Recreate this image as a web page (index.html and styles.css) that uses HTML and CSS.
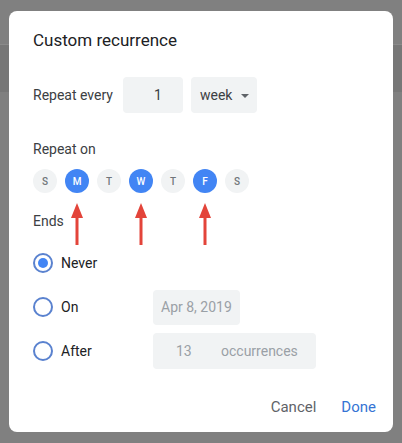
FILE: index.html
```html
<!DOCTYPE html>
<html>
<head>
<meta charset="utf-8">
<link rel="stylesheet" href="styles.css">
</head>
<body>
<div class="backdrop">
  <div class="dialog">
    <h1 class="title">Custom recurrence</h1>
    <div class="repeat-every">
      <span class="label">Repeat every</span>
      <div class="field num">1</div>
      <div class="field select">week<span class="caret"></span></div>
    </div>
    <div class="section-label">Repeat on</div>
    <div class="days">
      <div class="day">S</div>
      <div class="day sel">M<svg class="arrow" width="14" height="42" viewBox="0 0 14 42"><polygon points="7,0 13,15 1,15" fill="#e3443a"/><rect x="5.5" y="13" width="3" height="29" fill="#e3443a"/></svg></div>
      <div class="day">T</div>
      <div class="day sel">W<svg class="arrow" width="14" height="42" viewBox="0 0 14 42"><polygon points="7,0 13,15 1,15" fill="#e3443a"/><rect x="5.5" y="13" width="3" height="29" fill="#e3443a"/></svg></div>
      <div class="day">T</div>
      <div class="day sel">F<svg class="arrow" width="14" height="42" viewBox="0 0 14 42"><polygon points="7,0 13,15 1,15" fill="#e3443a"/><rect x="5.5" y="13" width="3" height="29" fill="#e3443a"/></svg></div>
      <div class="day">S</div>
    </div>
    <div class="section-label ends-label">Ends</div>
    <div class="ends">
      <div class="end-row">
        <div class="choice"><span class="radio checked"></span><span>Never</span></div>
      </div>
      <div class="end-row">
        <div class="choice"><span class="radio"></span><span>On</span></div>
        <div class="field disabled date">Apr 8, 2019</div>
      </div>
      <div class="end-row">
        <div class="choice"><span class="radio"></span><span>After</span></div>
        <div class="field disabled occ"><span class="occ-num">13</span><span>occurrences</span></div>
      </div>
    </div>
    <div class="actions">
      <span class="btn cancel">Cancel</span>
      <span class="btn done">Done</span>
    </div>
  </div>
</div>
</body>
</html>
```
FILE: styles.css
```css
* { box-sizing: border-box; }
html, body { margin: 0; padding: 0; }
body {
  width: 402px;
  height: 443px;
  overflow: hidden;
  font-family: Roboto, "Noto Sans", "Liberation Sans", sans-serif;
  background: linear-gradient(to bottom, #808080 0, #808080 44px, #8a8a8a 44px, #8a8a8a 45px, #777777 45px, #777777 92px, #808080 92px, #808080 100%);
}
.backdrop {
  padding: 11px 9px 11px 9px;
}
.dialog {
  width: 384px;
  height: 421px;
  background: #fff;
  border-radius: 8px;
  padding: 17px 24px 0 24px;
  color: #3c4043;
  display: flex;
  flex-direction: column;
}
.title {
  margin: 0;
  font-size: 17px;
  line-height: 24px;
  font-weight: 400;
  color: #202124;
}
.repeat-every {
  display: flex;
  align-items: center;
  margin-top: 25px;
  height: 36px;
}
.label {
  font-size: 14px;
  width: 90px;
}
.field {
  background: #f1f3f4;
  border-radius: 4px;
  height: 36px;
  display: flex;
  align-items: center;
  font-size: 14px;
}
.num {
  width: 60px;
  justify-content: center;
  padding-left: 10px;
}
.select {
  width: 66px;
  margin-left: 8px;
  padding-left: 9px;
  position: relative;
}
.caret {
  position: absolute;
  left: 50px;
  top: 17px;
  width: 0;
  height: 0;
  border-left: 4px solid transparent;
  border-right: 4px solid transparent;
  border-top: 4px solid #5f6368;
}
.section-label {
  font-size: 14px;
  line-height: 20px;
  margin-top: 26px;
}
.days {
  display: flex;
  gap: 8px;
  margin-top: 10px;
}
.day {
  position: relative;
  width: 24px;
  height: 24px;
  border-radius: 50%;
  background: #f1f3f4;
  color: #70757a;
  font-size: 10px;
  font-weight: 500;
  display: flex;
  align-items: center;
  justify-content: center;
}
.day.sel {
  background: #4285f4;
  color: #fff;
}
.arrow {
  position: absolute;
  top: 34px;
  left: 5px;
}
.ends-label {
  margin-top: 18px;
}
.ends {
  margin-top: 10px;
  display: flex;
  flex-direction: column;
}
.end-row {
  height: 44px;
  display: flex;
  align-items: center;
}
.choice {
  width: 120px;
  display: flex;
  align-items: center;
  gap: 8px;
  font-size: 14px;
  font-weight: 400;
  color: #202124;
}
.radio {
  width: 20px;
  height: 20px;
  border-radius: 50%;
  border: 2px solid #5a82cf;
  display: flex;
  align-items: center;
  justify-content: center;
}
.radio.checked::after {
  content: "";
  width: 10px;
  height: 10px;
  border-radius: 50%;
  background: #4285f4;
}
.disabled {
  color: #9aa0a6;
}
.date {
  width: 87px;
  height: 35px;
  padding-left: 8px;
}
.occ {
  width: 163px;
  padding-left: 23px;
}
.occ-num {
  width: 45px;
}
.actions {
  margin-top: auto;
  height: 50px;
  display: flex;
  justify-content: flex-end;
  align-items: center;
  gap: 25px;
  margin-right: -7px;
}
.btn {
  font-size: 15px;
  font-weight: 400;
}
.cancel { color: #5f6368; }
.done { color: #3574d4; }
```
